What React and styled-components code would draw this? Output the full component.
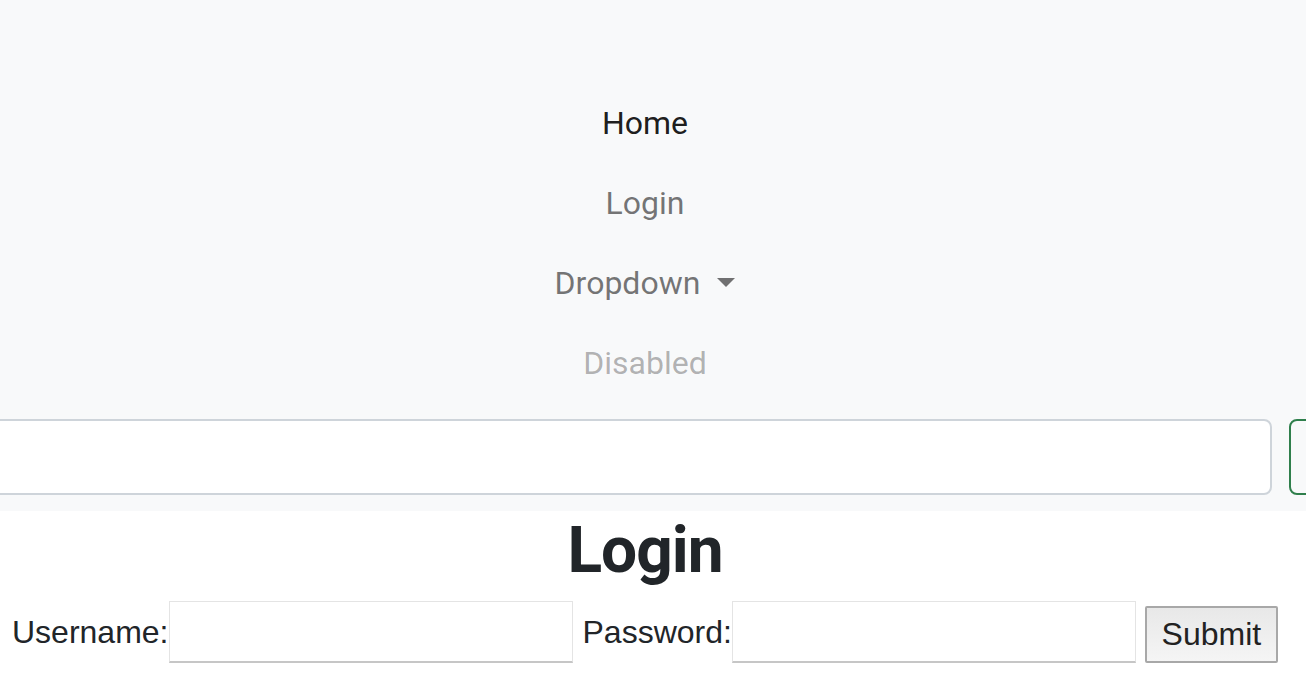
import React from "react";
import styled, { createGlobalStyle } from "styled-components";

const GlobalStyle = createGlobalStyle`
    body {
        margin: 0;
        background: #fff;
        font-family: Roboto, "Liberation Sans", sans-serif;
        color: #212529;
    }
`;

const App = () => {
    return (
        <>
            <GlobalStyle />
            <Navbar>
                <NavList>
                    <NavItem>
                        <NavLink $tone="active" href="#">Home</NavLink>
                    </NavItem>
                    <NavItem>
                        <NavLink href="#">Login</NavLink>
                    </NavItem>
                    <NavItem>
                        <NavLink href="#">
                            Dropdown
                            <Caret />
                        </NavLink>
                    </NavItem>
                    <NavItem>
                        <NavLink $tone="disabled">Disabled</NavLink>
                    </NavItem>
                </NavList>

                <SearchForm>
                    <SearchInput type="search" aria-label="Search" />
                    <SearchButton type="button" aria-label="Search" />
                </SearchForm>
            </Navbar>

            <Title>Login</Title>

            <LoginForm>
                <Label htmlFor="username">Username:</Label>
                <Field type="text" id="username" />
                <Label htmlFor="password">Password:</Label>
                <Field type="password" id="password" />
                <SubmitButton type="submit">Submit</SubmitButton>
            </LoginForm>
        </>
    );
};

export default App;

const Navbar = styled.nav`
    background-color: #f8f9fa;
    padding: 83px 0 16px 0;
    overflow: hidden;
`;

const NavList = styled.ul`
    list-style: none;
    margin: 0;
    padding: 0 16px 0 0;
    display: flex;
    flex-direction: column;
    align-items: center;
`;

const NavItem = styled.li`
    display: flex;
    justify-content: center;
`;

const NavLink = styled.a`
    display: flex;
    align-items: center;
    padding: 16px 0;
    font-size: 32px;
    line-height: 48px;
    text-decoration: none;
    color: ${({ $tone }) =>
        $tone === "active"
            ? "rgba(0, 0, 0, 0.9)"
            : $tone === "disabled"
            ? "rgba(0, 0, 0, 0.3)"
            : "rgba(0, 0, 0, 0.55)"};
`;

const Caret = styled.span`
    display: inline-block;
    margin-left: 17px;
    margin-top: -2px;
    border-top: 9px solid currentColor;
    border-left: 9px solid transparent;
    border-right: 9px solid transparent;
`;

const SearchForm = styled.form`
    display: flex;
    margin-top: 16px;
    height: 76px;
`;

const SearchInput = styled.input`
    flex: 0 0 1300px;
    margin-left: -28px;
    box-sizing: border-box;
    height: 76px;
    border: 2px solid #ced4da;
    border-radius: 8px;
    background: #fff;
    outline: none;
`;

const SearchButton = styled.button`
    flex: 0 0 160px;
    margin-left: 17px;
    height: 76px;
    border: 2px solid #2f7f4c;
    border-radius: 8px;
    background: transparent;
`;

const Title = styled.h1`
    margin: 0;
    padding-right: 16px;
    text-align: center;
    font-size: 64px;
    line-height: 80px;
    font-weight: 700;
    letter-spacing: -1px;
    color: #212529;
`;

const LoginForm = styled.form`
    display: flex;
    align-items: center;
    padding: 10px 0 0 12px;
    font-family: "Liberation Sans", Arial, sans-serif;
`;

const Label = styled.label`
    font-size: 32px;
    line-height: 40px;
    color: #212529;
`;

const Field = styled.input`
    box-sizing: border-box;
    width: 404px;
    height: 62px;
    margin: 0 10px 0 0;
    border: 1px solid #e4e4e4;
    border-bottom: 2px solid #c6c6c6;
    background: #fff;
    outline: none;
`;

const SubmitButton = styled.button`
    box-sizing: border-box;
    width: 133px;
    height: 57px;
    margin: 4px 0 0 -1px;
    border: 2px solid #a8a8a8;
    border-radius: 2px;
    background: linear-gradient(#e8e8e8, #f5f5f5);
    font-family: "Liberation Sans", Arial, sans-serif;
    font-size: 32px;
    color: #222;
    padding: 0;
`;
